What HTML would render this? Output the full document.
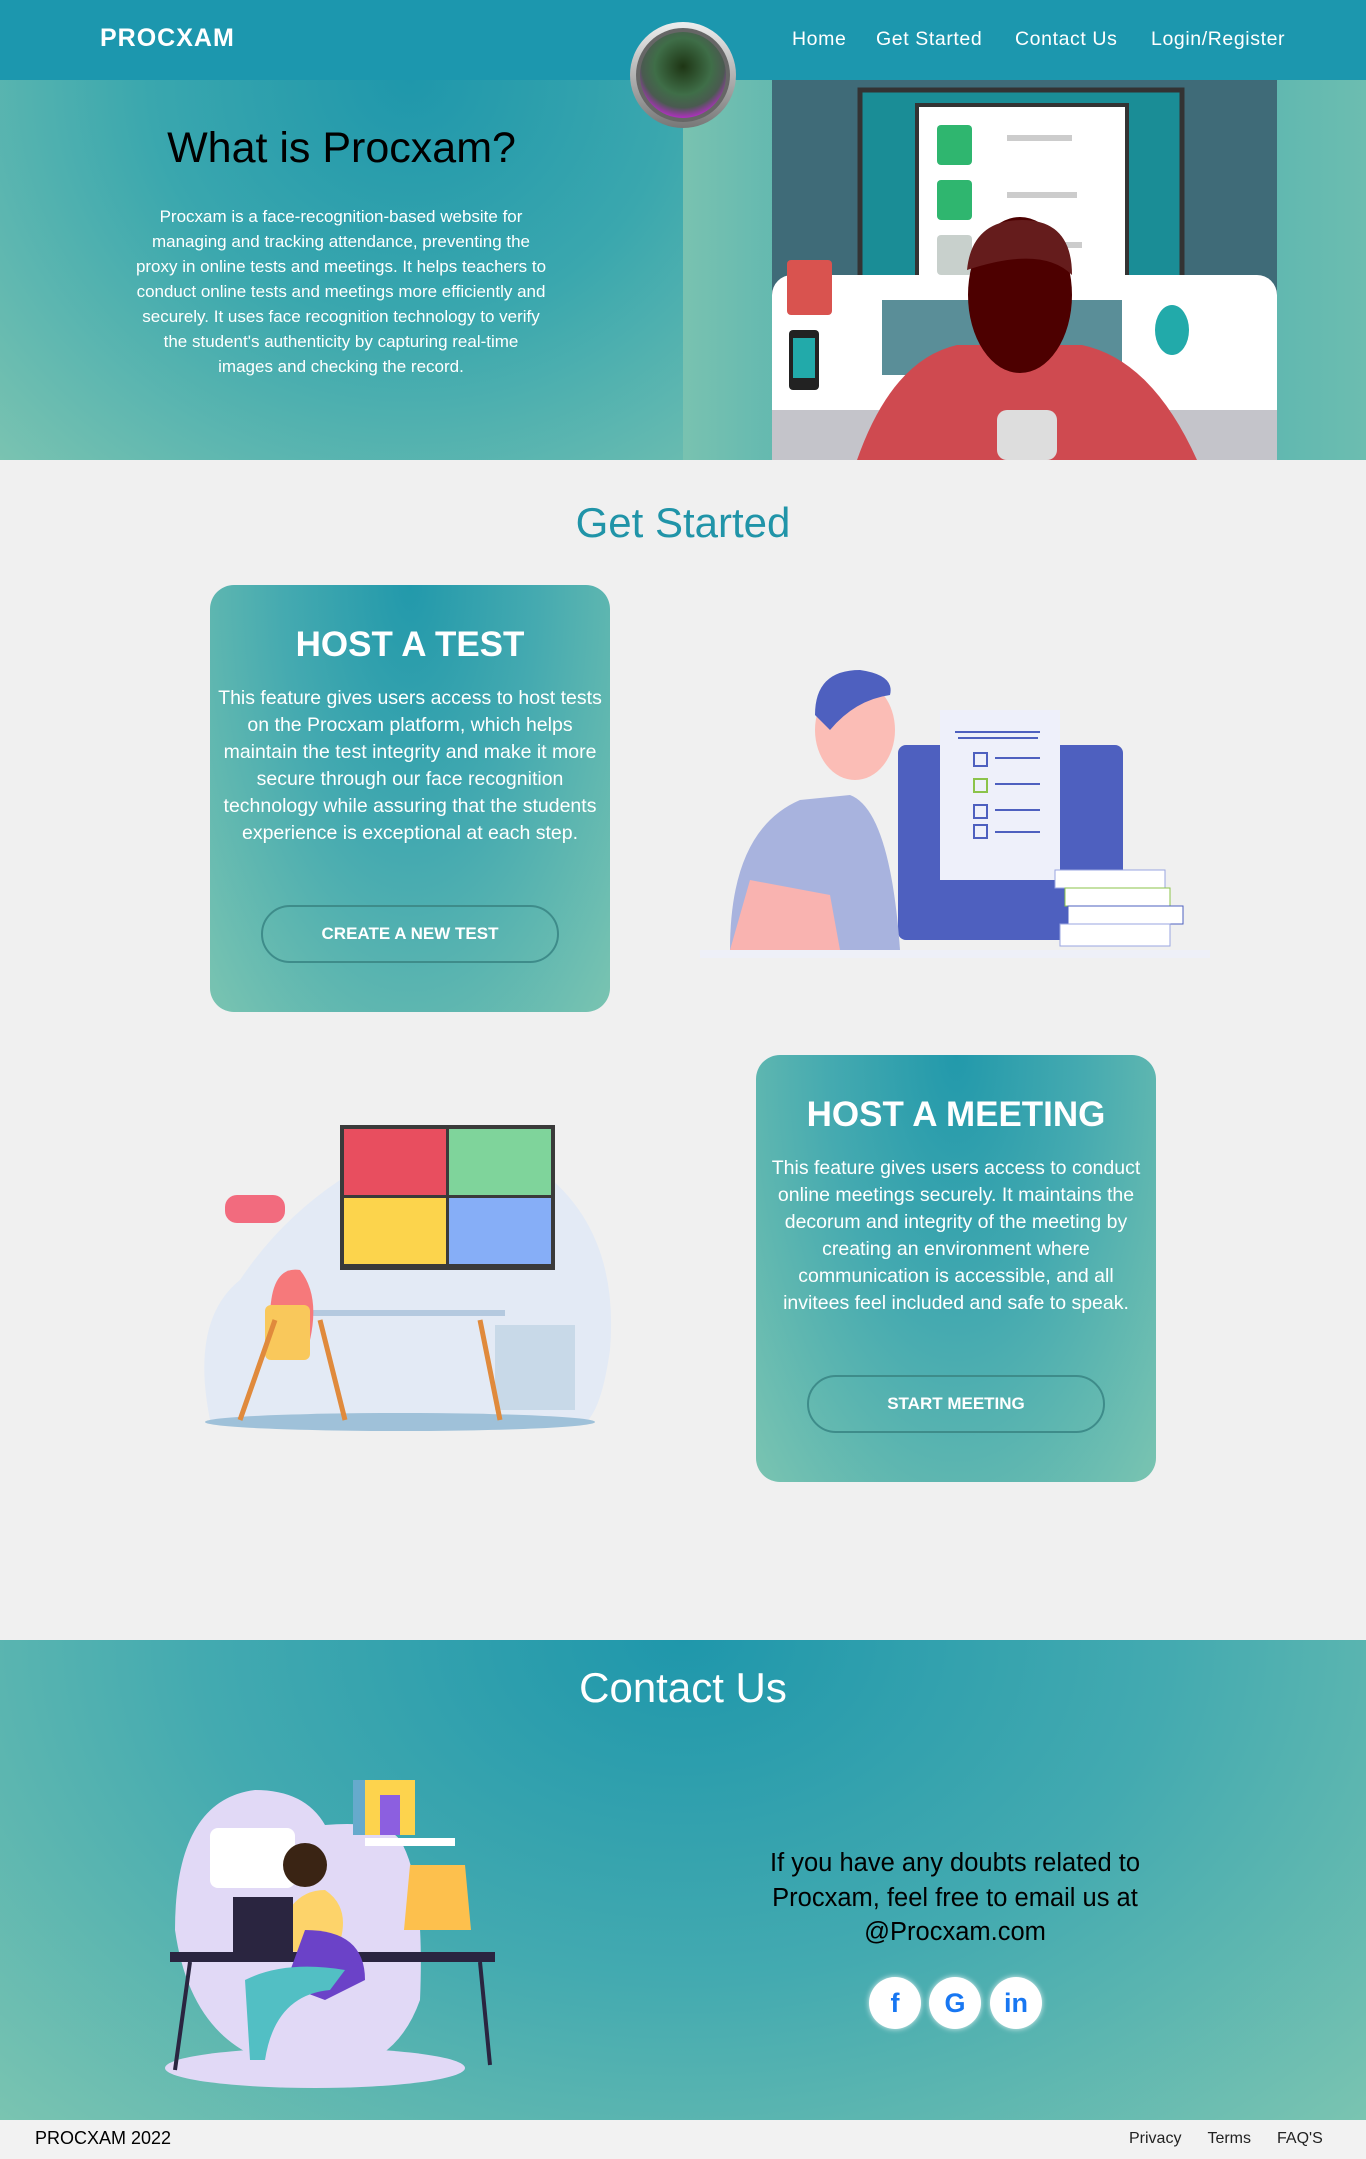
<!DOCTYPE html>
<html><head><meta charset="utf-8"><style>
*{margin:0;padding:0;box-sizing:border-box}
body{width:1366px;height:2159px;background:#f0f0f0;font-family:"Liberation Sans",sans-serif;position:relative;overflow:hidden}
.abs{position:absolute}
.grad{background:radial-gradient(ellipse at 60% 0%,#1f97ab 0%,#3aa7ae 45%,#7ac3b1 100%)}
nav{position:absolute;left:0;top:0;width:1366px;height:80px;background:#1c97ae}
nav .logo{position:absolute;left:100px;top:24px;color:#fff;font-weight:bold;font-size:25px;letter-spacing:1px}
nav .l{position:absolute;top:28px;color:#fff;font-size:19.5px;letter-spacing:.6px;white-space:nowrap}
.card{position:absolute;width:400px;height:427px;border-radius:24px;text-align:center;color:#fff;background:radial-gradient(ellipse at 50% 0%,#2299ab 0%,#45aab0 45%,#7ac4b1 100%)}
.card h2{font-size:35px;margin-top:40px;font-weight:bold}
.card p{font-size:19.5px;line-height:27px;margin-top:20px;white-space:nowrap;margin-left:-10px;margin-right:-10px}
.btn{position:absolute;left:51px;top:320px;width:298px;height:58px;border:2px solid #3e8c8a;border-radius:30px;font-weight:bold;font-size:17px;line-height:54px}
.soc{position:absolute;top:1977px;width:52px;height:52px;border-radius:50%;background:#fff;color:#1877f2;font-weight:bold;font-size:27px;text-align:center;line-height:52px;box-shadow:0 0 6px rgba(255,255,255,.8)}
</style></head><body>
<nav><div class="logo">PROCXAM</div>
<div class="l" style="left:792px">Home</div><div class="l" style="left:876px">Get Started</div><div class="l" style="left:1015px">Contact Us</div><div class="l" style="left:1151px">Login/Register</div></nav>
<div class="abs grad" style="left:0;top:80px;width:683px;height:380px"></div>
<div class="abs grad" style="left:683px;top:80px;width:683px;height:380px;background:linear-gradient(90deg,#79c2b0,#3aa7ae 40%,#6cbdb0)"></div>
<div class="abs" style="left:0;top:124px;width:683px;text-align:center;font-size:43px;color:#000">What is Procxam?</div>
<div class="abs" style="left:66px;top:204px;width:550px;text-align:center;font-size:17px;line-height:25px;color:#fff;white-space:nowrap">Procxam is a face-recognition-based website for<br>managing and tracking attendance, preventing the<br>proxy in online tests and meetings. It helps teachers to<br>conduct online tests and meetings more efficiently and<br>securely. It uses face recognition technology to verify<br>the student's authenticity by capturing real-time<br>images and checking the record.</div>
<svg class="abs" style="left:772px;top:80px" width="505" height="380" viewBox="0 0 505 380">
<rect width="505" height="380" fill="#3f6b78"/>
<rect x="88" y="10" width="322" height="210" fill="#1a8d96" stroke="#333" stroke-width="5"/>
<rect x="145" y="25" width="210" height="180" fill="#fff" stroke="#333" stroke-width="4"/>
<rect x="165" y="45" width="35" height="40" rx="4" fill="#2fb66f"/><rect x="165" y="100" width="35" height="40" rx="4" fill="#2fb66f"/><rect x="165" y="155" width="35" height="40" rx="4" fill="#c8d0cc"/>
<rect x="235" y="55" width="65" height="6" fill="#ccc"/><rect x="235" y="112" width="70" height="6" fill="#ccc"/><rect x="235" y="162" width="75" height="6" fill="#ccc"/>
<rect x="0" y="195" width="505" height="185" rx="20" fill="#fff"/>
<rect x="0" y="330" width="505" height="50" fill="#c4c4ca"/>
<rect x="110" y="220" width="240" height="75" fill="#5a8e98"/>
<rect x="15" y="180" width="45" height="55" rx="4" fill="#d9534f"/>
<rect x="17" y="250" width="30" height="60" rx="4" fill="#222"/><rect x="21" y="258" width="22" height="40" fill="#2aa"/>
<ellipse cx="400" cy="250" rx="17" ry="25" fill="#2aa"/>
<path d="M85 380 Q120 280 185 265 L310 265 Q380 280 425 380Z" fill="#cf4a50"/>
<ellipse cx="248" cy="215" rx="52" ry="78" fill="#4d0000"/>
<path d="M195 190 Q200 140 250 140 Q300 140 300 195 Q270 165 195 190Z" fill="#651c1c"/>
<rect x="225" y="330" width="60" height="50" rx="10" fill="#ddd"/>
</svg>
<svg class="abs" style="left:629px;top:21px" width="108" height="108" viewBox="0 0 108 108">
<defs><radialGradient id="l" cx="50%" cy="40%" r="60%"><stop offset="0" stop-color="#1e3514"/><stop offset=".55" stop-color="#3f6e48"/><stop offset=".8" stop-color="#4a5a50"/><stop offset="1" stop-color="#b030c0"/></radialGradient>
<linearGradient id="r" x1="0" y1="0" x2="0" y2="1"><stop offset="0" stop-color="#eee"/><stop offset="1" stop-color="#777"/></linearGradient></defs>
<circle cx="54" cy="54" r="53" fill="url(#r)"/><circle cx="54" cy="54" r="47" fill="#666"/><circle cx="54" cy="54" r="43" fill="url(#l)"/>
</svg>
<div class="abs" style="left:0;top:499px;width:1366px;text-align:center;font-size:42px;color:#2094a8">Get Started</div>
<div class="card" style="left:210px;top:585px"><h2>HOST A TEST</h2><p>This feature gives users access to host tests<br>on the Procxam platform, which helps<br>maintain the test integrity and make it more<br>secure through our face recognition<br>technology while assuring that the students<br>experience is exceptional at each step.</p><div class="btn">CREATE A NEW TEST</div></div>
<svg class="abs" style="left:690px;top:660px" width="525" height="310" viewBox="0 0 525 310">
<rect x="10" y="290" width="510" height="8" fill="#eef0f8"/>
<rect x="208" y="85" width="225" height="195" rx="8" fill="#4e60bf"/>
<rect x="250" y="50" width="120" height="170" fill="#eef0fa"/>
<g stroke="#4e60bf" stroke-width="2" fill="none"><line x1="265" y1="72" x2="350" y2="72"/><line x1="268" y1="78" x2="348" y2="78"/><rect x="284" y="93" width="13" height="13"/><rect x="284" y="145" width="13" height="13"/><rect x="284" y="165" width="13" height="13"/><line x1="305" y1="98" x2="350" y2="98"/><line x1="305" y1="124" x2="350" y2="124"/><line x1="305" y1="150" x2="350" y2="150"/><line x1="305" y1="172" x2="350" y2="172"/></g>
<rect x="284" y="119" width="13" height="13" fill="none" stroke="#8bc34a" stroke-width="2"/>
<rect x="365" y="210" width="110" height="18" fill="#fff" stroke="#9aa6e0"/><rect x="375" y="228" width="105" height="18" fill="#fff" stroke="#8bc34a"/><rect x="378" y="246" width="115" height="18" fill="#fff" stroke="#4e60bf"/><rect x="370" y="264" width="110" height="22" fill="#fff" stroke="#9aa6e0"/>
<path d="M40 290 Q40 170 110 140 L160 135 Q200 150 210 290Z" fill="#a8b3de"/>
<path d="M40 290 L60 220 L140 235 L150 290Z" fill="#f9b3b0"/>
<ellipse cx="165" cy="70" rx="40" ry="50" fill="#fbbdb6"/>
<path d="M125 55 Q125 10 170 10 Q205 15 200 35 Q165 40 140 70Z" fill="#4e60bf"/>
</svg>
<div class="card" style="left:756px;top:1055px"><h2>HOST A MEETING</h2><p>This feature gives users access to conduct<br>online meetings securely. It maintains the<br>decorum and integrity of the meeting by<br>creating an environment where<br>communication is accessible, and all<br>invitees feel included and safe to speak.</p><div class="btn">START MEETING</div></div>
<svg class="abs" style="left:200px;top:1120px" width="420" height="315" viewBox="0 0 420 315">
<path d="M10 300 Q-10 200 40 160 Q80 100 140 60 L340 50 Q420 110 410 230 Q400 300 380 305Z" fill="#e3eaf5"/>
<ellipse cx="200" cy="302" rx="195" ry="9" fill="#9fc1d9"/>
<rect x="140" y="5" width="215" height="145" fill="#3a3a3a"/>
<rect x="144" y="9" width="102" height="66" fill="#e84e5f"/><rect x="249" y="9" width="102" height="66" fill="#7fd49b"/>
<rect x="144" y="78" width="102" height="66" fill="#fcd44c"/><rect x="249" y="78" width="102" height="66" fill="#86aef7"/>
<rect x="95" y="190" width="210" height="6" fill="#b4c9df"/>
<rect x="295" y="205" width="80" height="85" fill="#c8d9e8"/>
<rect x="25" y="75" width="60" height="28" rx="12" fill="#f26b7e"/>
<path d="M70 200 Q70 145 100 150 Q120 175 110 220Z" fill="#f6797b"/>
<rect x="65" y="185" width="45" height="55" rx="6" fill="#f9c85b"/>
<path d="M40 300 L75 200 M145 300 L120 200 M300 300 L280 200" stroke="#e08a3c" stroke-width="5"/>
</svg>
<div class="abs grad" style="left:0;top:1640px;width:1366px;height:480px;background:radial-gradient(ellipse at 50% 0%,#1f97ab 0%,#43aab0 50%,#7ac4b1 100%)"></div>
<div class="abs" style="left:0;top:1664px;width:1366px;text-align:center;font-size:42px;color:#fff">Contact Us</div>
<svg class="abs" style="left:165px;top:1780px" width="330" height="310" viewBox="0 0 330 310">
<path d="M10 150 Q10 20 90 10 Q140 10 160 45 Q220 40 235 60 Q260 100 255 220 Q230 290 160 290 Q30 290 10 150Z" fill="#e1d9f6"/>
<ellipse cx="150" cy="288" rx="150" ry="20" fill="#e1d9f6"/>
<rect x="45" y="48" width="85" height="60" rx="8" fill="#fff"/>
<rect x="188" y="0" width="62" height="55" fill="#fdd34d"/><rect x="188" y="0" width="12" height="55" fill="#6ac"/><rect x="215" y="15" width="20" height="40" fill="#8c5fe0"/>
<rect x="200" y="58" width="90" height="8" fill="#fff"/>
<path d="M245 85 h55 l6 65 h-67z" fill="#fdc04d"/>
<rect x="5" y="172" width="325" height="10" fill="#2a2540"/>
<path d="M25 182 L10 290 M315 182 L325 285" stroke="#2a2540" stroke-width="4"/>
<path d="M160 110 Q120 110 110 170 L170 175 Q190 130 160 110Z" fill="#fdd36a"/>
<rect x="68" y="117" width="60" height="55" fill="#2a2540"/>
<path d="M140 150 Q200 150 200 200 L160 220 L120 205Z" fill="#6b42c8"/>
<path d="M80 200 Q120 180 180 190 L165 210 Q110 215 100 280 L85 280Z" fill="#52bfc4"/>
<circle cx="140" cy="85" r="22" fill="#3a2414"/>
</svg>
<div class="abs" style="left:720px;top:1846px;width:470px;text-align:center;font-size:25.5px;line-height:34.5px;color:#000;white-space:nowrap">If you have any doubts related to<br>Procxam, feel free to email us at<br>@Procxam.com</div>
<div class="soc" style="left:869px">f</div>
<div class="soc" style="left:929px">G</div>
<div class="soc" style="left:990px">in</div>
<div class="abs" style="left:0;top:2120px;width:1366px;height:39px;background:#f2f2f2"></div>
<div class="abs" style="left:35px;top:2128px;font-size:18px;color:#000">PROCXAM 2022</div>
<div class="abs" style="left:1129px;top:2130px;font-size:16px;color:#222">Privacy<span style="margin-left:26px">Terms</span><span style="margin-left:26px">FAQ'S</span></div>
</body></html>
